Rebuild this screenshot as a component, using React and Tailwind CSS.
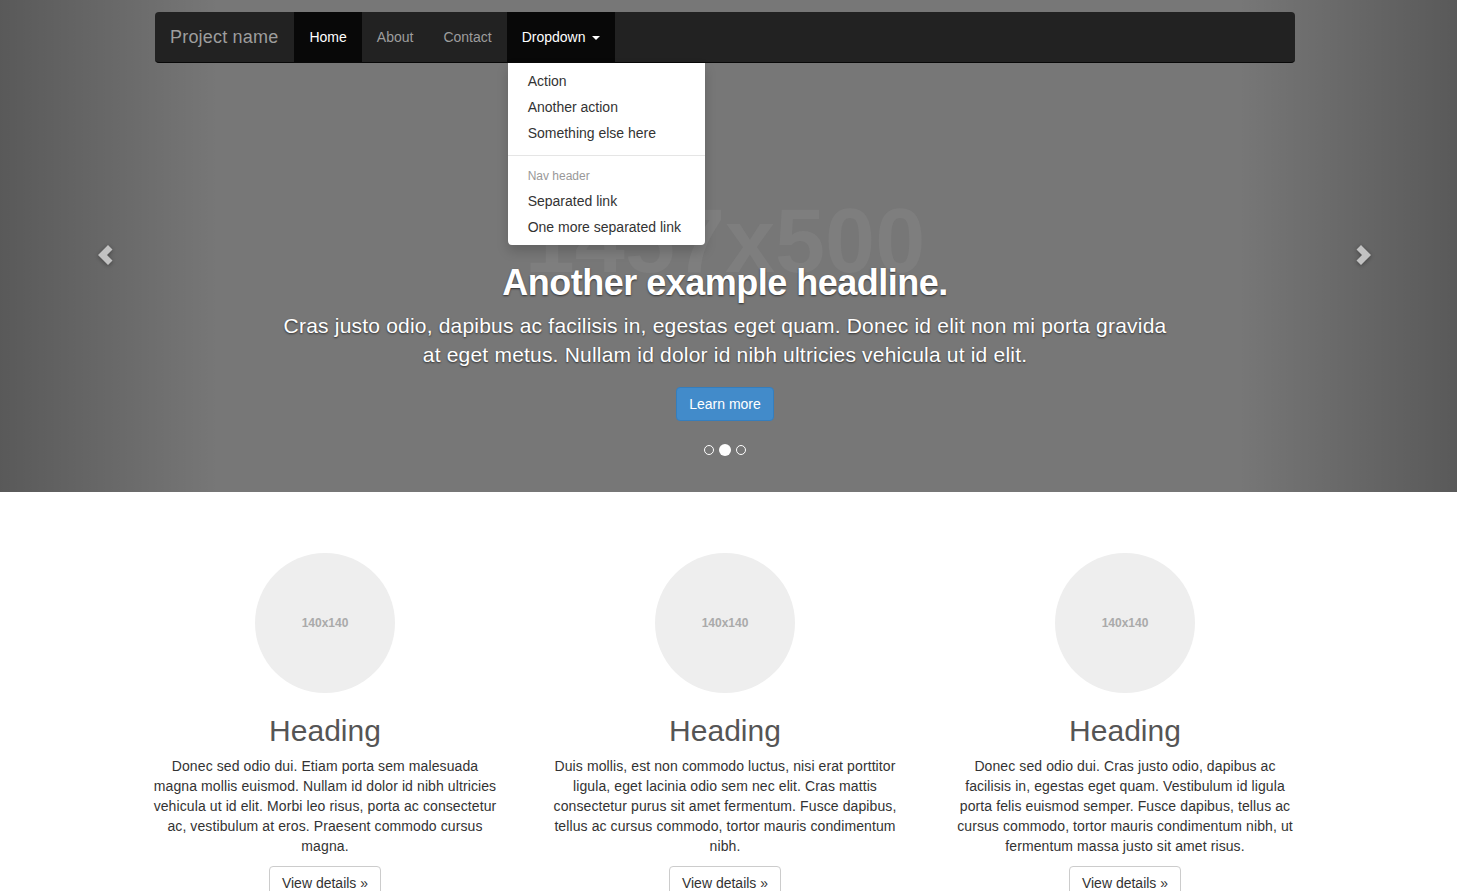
import React from "react";

const font = { fontFamily: '"Liberation Sans", Arial, sans-serif' };

const Chevron = ({ dir }) => (
  <svg width="16" height="20" viewBox="0 0 16 20" className="drop-shadow-[0_1px_2px_rgba(0,0,0,0.6)]">
    {dir === "left" ? (
      <path d="M11 0 L15.5 4.5 L10 10 L15.5 15.5 L11 20 L1 10 Z" fill="#fff" />
    ) : (
      <path d="M5 0 L0.5 4.5 L6 10 L0.5 15.5 L5 20 L15 10 Z" fill="#fff" />
    )}
  </svg>
);

const Navbar = () => (
  <div className="absolute top-[12px] left-0 right-0 z-20">
    <div className="ml-[155px] w-[1140px] h-[51px] bg-[#222] border-b border-[#080808] rounded-[4px] flex items-stretch text-[14px]">
      <a className="pl-[15px] pr-[16px] flex items-center text-[18px] text-[#9d9d9d] tracking-[0.2px]">Project name</a>
      <a className="px-[15px] flex items-center bg-[#080808] text-white">Home</a>
      <a className="px-[15px] flex items-center text-[#9d9d9d]">About</a>
      <a className="px-[15px] flex items-center text-[#9d9d9d]">Contact</a>
      <div className="relative flex">
        <a className="px-[15px] flex items-center gap-[7px] bg-[#080808] text-white">
          Dropdown
          <span className="w-0 h-0 border-x-[4px] border-x-transparent border-t-[4px] border-t-white mt-[2px]" />
        </a>
        <div className="absolute top-[51px] left-[1px] w-[197px] bg-white rounded-b-[4px] shadow-[0_6px_12px_rgba(0,0,0,0.175)] py-[5px] whitespace-nowrap text-[#333] text-[14px] leading-[20px]">
          <div className="px-[20px] py-[3px]">Action</div>
          <div className="px-[20px] py-[3px]">Another action</div>
          <div className="px-[20px] py-[3px]">Something else here</div>
          <div className="h-px bg-[#e5e5e5] my-[9px]" />
          <div className="px-[20px] py-[3px] text-[12px] leading-[17px] text-[#999]">Nav header</div>
          <div className="px-[20px] py-[3px]">Separated link</div>
          <div className="px-[20px] py-[3px]">One more separated link</div>
        </div>
      </div>
    </div>
  </div>
);

const Carousel = () => (
  <div className="relative h-[492px] bg-[#777] overflow-hidden">
    <div className="absolute inset-y-0 left-0 right-[7px] flex items-center justify-center">
      <span className="text-[90px] font-bold text-[#7e7e7e] -mt-[10px]">1457x500</span>
    </div>
    <div className="absolute left-0 top-0 bottom-0 w-[15%] bg-gradient-to-r from-[rgba(0,0,0,0.25)] to-transparent" />
    <div className="absolute right-0 top-0 bottom-0 w-[15%] bg-gradient-to-l from-[rgba(0,0,0,0.25)] to-transparent" />
    <div className="absolute left-[97px] top-[245px] opacity-60">
      <Chevron dir="left" />
    </div>
    <div className="absolute left-[1356px] top-[245px] opacity-60">
      <Chevron dir="right" />
    </div>
    <div className="absolute top-[263px] left-0 right-[7px] flex flex-col items-center text-white [text-shadow:0_1px_2px_rgba(0,0,0,0.6)]">
      <h1 className="text-[36px] leading-[40px] font-bold tracking-[-0.5px]">Another example headline.</h1>
      <p className="mt-[8px] w-[920px] text-center text-[21px] leading-[29px] tracking-[0.2px]">
        Cras justo odio, dapibus ac facilisis in, egestas eget quam. Donec id elit non mi porta gravida
        <br />
        at eget metus. Nullam id dolor id nibh ultricies vehicula ut id elit.
      </p>
      <a className="mt-[18px] h-[34px] px-[12px] flex items-center rounded-[4px] bg-[#428bca] border border-[#357ebd] text-[14px] [text-shadow:none]">
        Learn more
      </a>
      <div className="mt-[23px] flex items-center gap-[5px]">
        <span className="w-[10px] h-[10px] rounded-full border border-white" />
        <span className="w-[12px] h-[12px] rounded-full bg-white" />
        <span className="w-[10px] h-[10px] rounded-full border border-white" />
      </div>
    </div>
  </div>
);

const cols = [
  [
    "Donec sed odio dui. Etiam porta sem malesuada",
    "magna mollis euismod. Nullam id dolor id nibh ultricies",
    "vehicula ut id elit. Morbi leo risus, porta ac consectetur",
    "ac, vestibulum at eros. Praesent commodo cursus",
    "magna.",
  ],
  [
    "Duis mollis, est non commodo luctus, nisi erat porttitor",
    "ligula, eget lacinia odio sem nec elit. Cras mattis",
    "consectetur purus sit amet fermentum. Fusce dapibus,",
    "tellus ac cursus commodo, tortor mauris condimentum",
    "nibh.",
  ],
  [
    "Donec sed odio dui. Cras justo odio, dapibus ac",
    "facilisis in, egestas eget quam. Vestibulum id ligula",
    "porta felis euismod semper. Fusce dapibus, tellus ac",
    "cursus commodo, tortor mauris condimentum nibh, ut",
    "fermentum massa justo sit amet risus.",
  ],
];

const Marketing = () => (
  <div className="ml-[125px] w-[1200px] grid grid-cols-3 pt-[61px]">
    {cols.map((lines, i) => (
      <div key={i} className="px-[20px] flex flex-col items-center text-center">
        <div className="w-[140px] h-[140px] rounded-full bg-[#eee] flex items-center justify-center text-[12px] font-bold text-[#aaa]">
          140x140
        </div>
        <h2 className="mt-[18px] text-[30px] leading-[40px] text-[#555]">Heading</h2>
        <p className="mt-[5px] text-[14px] leading-[20px] text-[#333] tracking-[0.1px]">
          {lines.map((l, j) => (
            <span key={j} className="block whitespace-nowrap">
              {l}
            </span>
          ))}
        </p>
        <a className="mt-[10px] h-[34px] px-[12px] flex items-center border border-[#ccc] rounded-[4px] text-[14px] text-[#333] bg-white">
          View details »
        </a>
      </div>
    ))}
  </div>
);

export default function App() {
  return (
    <div className="relative bg-white overflow-hidden h-[891px]" style={font}>
      <Navbar />
      <Carousel />
      <Marketing />
    </div>
  );
}
